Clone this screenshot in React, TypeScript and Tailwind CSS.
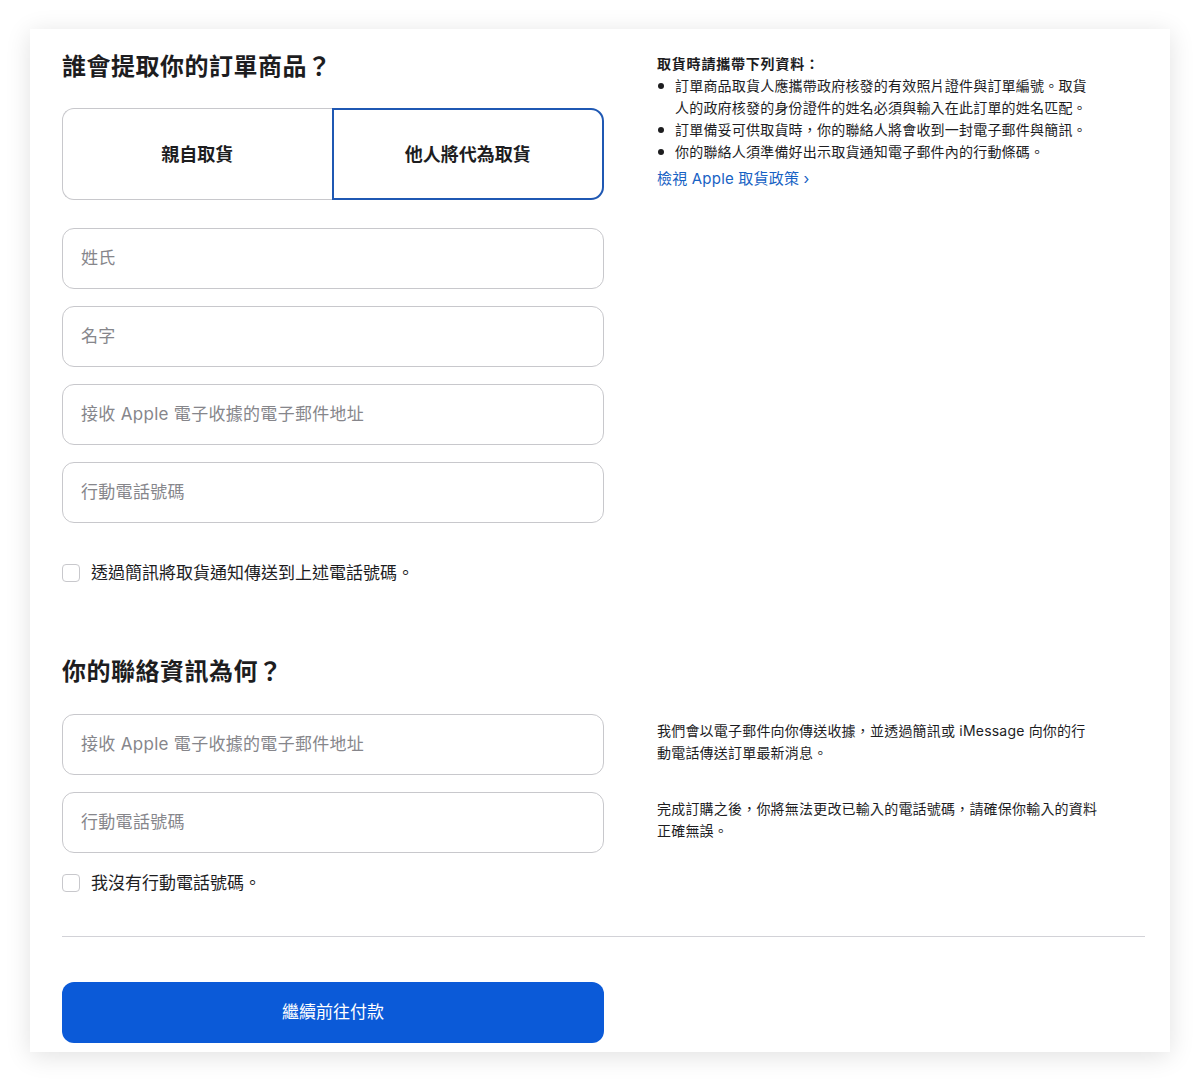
import React from "react";

const FONT = 'Inter, "Noto Sans CJK TC", "Noto Sans", sans-serif';

function Field({ placeholder }: { placeholder: string }) {
  return (
    <div className="h-[61px] w-full rounded-[12px] border border-[#c8c8cc] bg-white flex items-center px-[18px]">
      <span className="text-[17px] text-[#86868b] leading-none tracking-[0.3px]">{placeholder}</span>
    </div>
  );
}

function Check({ label }: { label: string }) {
  return (
    <div className="flex items-center h-[24px]">
      <span className="w-[18px] h-[18px] rounded-[4px] border border-[#c8c8cc] bg-white shrink-0" />
      <span className="ml-[11px] text-[17px] text-[#1d1d1f] leading-[24px]">{label}</span>
    </div>
  );
}

function Bullet({ children }: { children: React.ReactNode }) {
  return (
    <li className="flex">
      <span className="w-[18px] shrink-0 h-[22px] flex items-center pl-[1px]">
        <span className="w-[6px] h-[6px] rounded-full bg-[#1d1d1f]" />
      </span>
      <span>{children}</span>
    </li>
  );
}

export default function App() {
  return (
    <div className="w-full h-[1081px] bg-white pt-[29px]" style={{ fontFamily: FONT }}>
      <div className="mx-[30px] h-[1023px] bg-white shadow-[0_4px_24px_rgba(0,0,0,0.12)] pl-[32px] pr-[25px] pt-[23px] pb-[9px] flex flex-col">
        {/* Section 1 */}
        <div className="flex">
          <div className="w-[542px] shrink-0 flex flex-col">
            <h1 className="text-[24px] leading-[30px] font-semibold tracking-[0.5px] text-[#1d1d1f]">
              誰會提取你的訂單商品？
            </h1>
            <div className="mt-[26px] flex h-[92px]">
              <div className="flex-1 rounded-l-[12px] border border-r-0 border-[#c8c8cc] flex items-center justify-center">
                <span className="text-[18px] font-bold text-[#1d1d1f]">親自取貨</span>
              </div>
              <div className="flex-1 rounded-r-[13px] border-2 border-[#1f58b3] flex items-center justify-center">
                <span className="text-[18px] font-bold text-[#1d1d1f]">他人將代為取貨</span>
              </div>
            </div>
            <div className="mt-[28px] flex flex-col gap-[17px]">
              <Field placeholder="姓氏" />
              <Field placeholder="名字" />
              <Field placeholder="接收 Apple 電子收據的電子郵件地址" />
              <Field placeholder="行動電話號碼" />
            </div>
            <div className="mt-[38px]">
              <Check label="透過簡訊將取貨通知傳送到上述電話號碼。" />
            </div>
          </div>
          <div className="ml-[53px] pt-[1px] w-[460px] text-[14px] leading-[22px] tracking-[0.2px] text-[#1d1d1f]">
            <div className="font-bold tracking-[0.8px]">取貨時請攜帶下列資料：</div>
            <ul className="flex flex-col">
              <Bullet>
                訂單商品取貨人應攜帶政府核發的有效照片證件與訂單編號。取貨
                <br />
                人的政府核發的身份證件的姓名必須與輸入在此訂單的姓名匹配。
              </Bullet>
              <Bullet>訂單備妥可供取貨時，你的聯絡人將會收到一封電子郵件與簡訊。</Bullet>
              <Bullet>你的聯絡人須準備好出示取貨通知電子郵件內的行動條碼。</Bullet>
            </ul>
            <a className="mt-[5px] block text-[15px] text-[#1762c4] leading-[22px] tracking-[0.2px]">
              檢視 Apple 取貨政策 ›
            </a>
          </div>
        </div>

        {/* Section 2 */}
        <h2 className="mt-[72px] text-[24px] leading-[30px] font-semibold tracking-[0.5px] text-[#1d1d1f]">
          你的聯絡資訊為何？
        </h2>
        <div className="mt-[27px] flex">
          <div className="w-[542px] shrink-0 flex flex-col">
            <div className="flex flex-col gap-[17px]">
              <Field placeholder="接收 Apple 電子收據的電子郵件地址" />
              <Field placeholder="行動電話號碼" />
            </div>
            <div className="mt-[18px]">
              <Check label="我沒有行動電話號碼。" />
            </div>
          </div>
          <div className="ml-[53px] pt-[6px] w-[460px] text-[14px] leading-[22px] tracking-[0.2px] text-[#1d1d1f]">
            <p>
              我們會以電子郵件向你傳送收據，並透過簡訊或 iMessage 向你的行
              <br />
              動電話傳送訂單最新消息。
            </p>
            <p className="mt-[34px]">
              完成訂購之後，你將無法更改已輸入的電話號碼，請確保你輸入的資料
              <br />
              正確無誤。
            </p>
          </div>
        </div>

        <div className="mt-[41px] border-t border-[#d2d2d7]" />

        <button className="mt-[45px] w-[542px] h-[61px] rounded-[12px] bg-[#0b5ad8] text-white text-[17px]">
          繼續前往付款
        </button>
      </div>
    </div>
  );
}
